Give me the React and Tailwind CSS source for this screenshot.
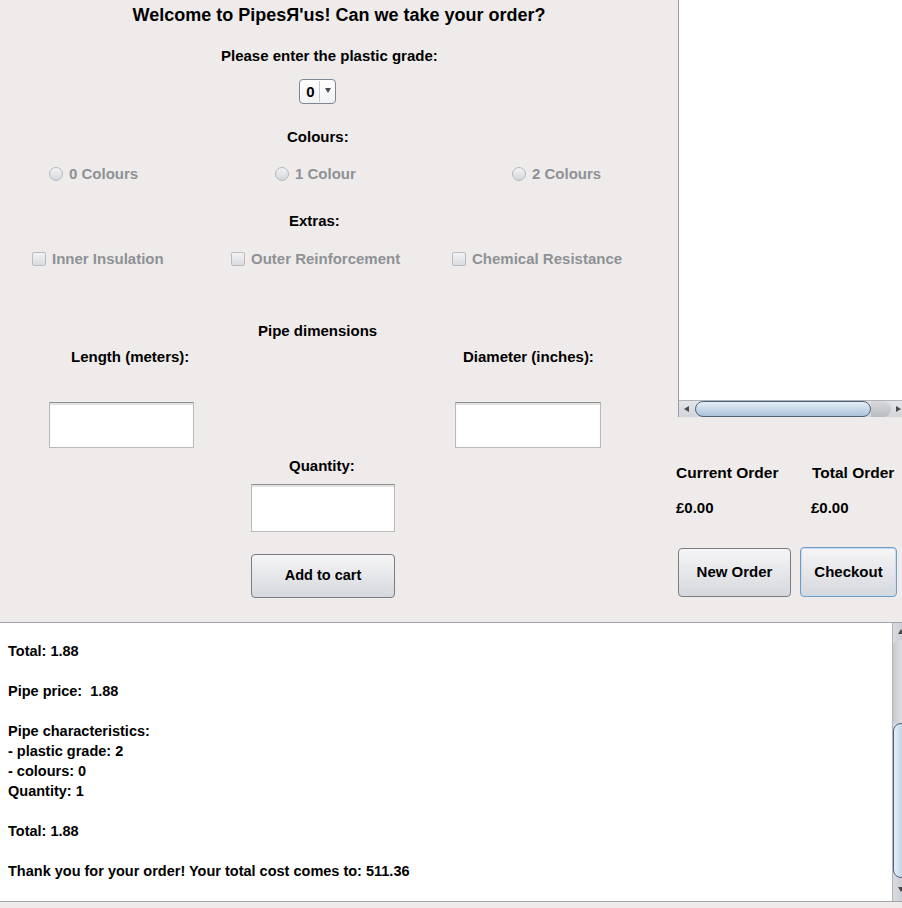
import React from "react";

const font = { fontFamily: '"Liberation Sans", Arial, sans-serif' };

function Radio({ label, className }) {
  return (
    <div className={`flex items-center h-4 ${className}`}>
      <span className="w-[14px] h-[14px] shrink-0 rounded-full border border-[#b4b8bd] bg-gradient-to-b from-[#f2f3f5] to-[#d3d6db]" />
      <span className="ml-[6px] text-[15px] font-bold text-[#8e9196] leading-4">{label}</span>
    </div>
  );
}

function Check({ label, className }) {
  return (
    <div className={`flex items-center h-4 ${className}`}>
      <span className="w-[14px] h-[14px] shrink-0 rounded-[2px] border border-[#b8bbc0] bg-gradient-to-b from-[#f4f4f6] to-[#d9dbdf]" />
      <span className="ml-[6px] text-[15px] font-bold text-[#8e9196] leading-4">{label}</span>
    </div>
  );
}

function Field({ className }) {
  return (
    <div
      className={`bg-white border border-[#b9b9b9] border-t-[#8f8f8f] shadow-[inset_0_2px_1px_#e2e2e2] ${className}`}
    />
  );
}

function Button({ children, className }) {
  return (
    <button
      className={`rounded-[4px] border border-[#7c7c80] bg-gradient-to-b from-[#f5f5f7] via-[#e6e7ea] to-[#d4d7dd] font-bold text-black ${className}`}
    >
      {children}
    </button>
  );
}

function Arrow({ dir }) {
  const paths = {
    left: "M6 1 L1 4 L6 7 Z",
    right: "M1 1 L6 4 L1 7 Z",
    up: "M1 6 L4 1 L7 6 Z",
    down: "M1 1 L4 6 L7 1 Z",
  };
  return (
    <svg width="8" height="8" viewBox="0 0 8 8">
      <path d={paths[dir]} fill="#4a4a4a" />
    </svg>
  );
}

export default function App() {
  const log = [
    "Total: 1.88",
    "",
    "Pipe price:  1.88",
    "",
    "Pipe characteristics:",
    "- plastic grade: 2",
    "- colours: 0",
    "Quantity: 1",
    "",
    "Total: 1.88",
    "",
    "Thank you for your order! Your total cost comes to: 511.36",
  ];

  return (
    <div className="w-[902px] h-[908px] overflow-hidden bg-[#efebea] text-black" style={font}>
      {/* Top area */}
      <div className="flex h-[622px]">
        {/* Order form */}
        <div className="w-[676px] shrink-0 flex flex-col">
          <div className="h-[30px] leading-[30px] text-center text-[18px] font-bold pl-[2px]">
            Welcome to PipesЯ'us! Can we take your order?
          </div>

          <div className="mt-[18px] ml-[221px] text-[15px] font-bold leading-4">
            Please enter the plastic grade:
          </div>

          <div className="mt-[15px] ml-[299px] w-[37px] h-[25px] flex rounded-[4px] border border-[#7d8792] bg-gradient-to-b from-white to-[#f1f2f4]">
            <span className="w-[19px] text-[15px] font-bold leading-[23px] text-center pl-[2px]">0</span>
            <span className="w-px bg-[#c5c9ce] my-[1px]" />
            <span className="flex-1 flex items-center justify-center pb-[2px]">
              <Arrow dir="down" />
            </span>
          </div>

          <div className="mt-[25px] ml-[287px] text-[15px] font-bold leading-4">Colours:</div>

          <div className="mt-[21px] ml-[49px] flex">
            <Radio label="0 Colours" className="w-[226px]" />
            <Radio label="1 Colour" className="w-[237px]" />
            <Radio label="2 Colours" />
          </div>

          <div className="mt-[31px] ml-[289px] text-[15px] font-bold leading-4">Extras:</div>

          <div className="mt-[22px] ml-[32px] flex">
            <Check label="Inner Insulation" className="w-[199px]" />
            <Check label="Outer Reinforcement" className="w-[221px]" />
            <Check label="Chemical Resistance" />
          </div>

          <div className="mt-[56px] ml-[258px] text-[15px] font-bold leading-4">Pipe dimensions</div>

          <div className="mt-[10px] flex text-[15px] font-bold leading-4">
            <span className="ml-[71px] w-[392px]">Length (meters):</span>
            <span>Diameter (inches):</span>
          </div>

          <div className="mt-[37px] flex">
            <Field className="ml-[49px] w-[145px] h-[46px]" />
            <Field className="ml-[261px] w-[146px] h-[46px]" />
          </div>

          <div className="mt-[10px] ml-[289px] text-[15px] font-bold leading-4">Quantity:</div>

          <Field className="mt-[10px] ml-[251px] w-[144px] h-[48px]" />

          <Button className="mt-[22px] ml-[251px] w-[144px] h-[44px] text-[14.5px]">Add to cart</Button>
        </div>

        {/* Cart side */}
        <div className="flex-1 flex flex-col">
          <div className="ml-[2px] h-[417px] w-[240px] border-l border-[#9c9ca6] bg-white flex flex-col">
            <div className="flex-1" />
            <div className="h-[17px] flex items-stretch border-t border-[#b0b3b8] bg-gradient-to-b from-[#e4e5e8] to-[#d2d4d8]">
              <div className="w-[16px] flex items-center justify-center">
                <Arrow dir="left" />
              </div>
              <div className="w-[176px] rounded-[8px] border border-[#4d6379] bg-gradient-to-b from-[#e6eef6] via-[#c8d9e8] to-[#aac3da]" />
              <div className="w-[20px] rounded-r-[8px] bg-gradient-to-b from-[#d8d9dc] to-[#b9bbc0]" />
              <div className="w-[16px] flex items-center justify-center">
                <Arrow dir="right" />
              </div>
            </div>
          </div>

          <div className="mt-[48px] flex text-[15.5px] font-bold leading-4">
            <span className="w-[136px]">Current Order</span>
            <span>Total Order</span>
          </div>
          <div className="mt-[19px] flex text-[15px] font-bold leading-4">
            <span className="w-[135px]">£0.00</span>
            <span>£0.00</span>
          </div>

          <div className="mt-[31px] flex items-start">
            <Button className="ml-[2px] mt-[1px] w-[113px] h-[49px] text-[15px]">New Order</Button>
            <Button className="ml-[9px] w-[97px] h-[50px] text-[15px] !border-[#6f9bc8] shadow-[inset_0_0_0_1px_#c9dcef]">
              Checkout
            </Button>
          </div>
        </div>
      </div>

      {/* Order log */}
      <div className="w-[920px] h-[280px] flex border-t border-b border-[#a2a2a8] bg-white">
        <div className="w-[892px] pl-[8px] pt-[18px] text-[14.5px] font-bold leading-5">
          {log.map((line, i) => (
            <div key={i} className="h-5 whitespace-pre">
              {line}
            </div>
          ))}
        </div>
        <div className="w-[17px] flex flex-col bg-gradient-to-r from-[#d9dbdf] to-[#c2c5ca] border-l border-[#b0b3b8]">
          <div className="h-[17px] flex items-center justify-center">
            <Arrow dir="up" />
          </div>
          <div className="h-[83px] bg-gradient-to-r from-[#c7c9cd] via-[#dcdde0] to-[#a9acb2] rounded-t-[6px]" />
          <div className="h-[155px] rounded-[8px] border border-[#4d6379] bg-gradient-to-r from-[#e6eef6] via-[#c8d9e8] to-[#aac3da]" />
          <div className="flex-1 flex items-center justify-center">
            <Arrow dir="down" />
          </div>
        </div>
      </div>
    </div>
  );
}
